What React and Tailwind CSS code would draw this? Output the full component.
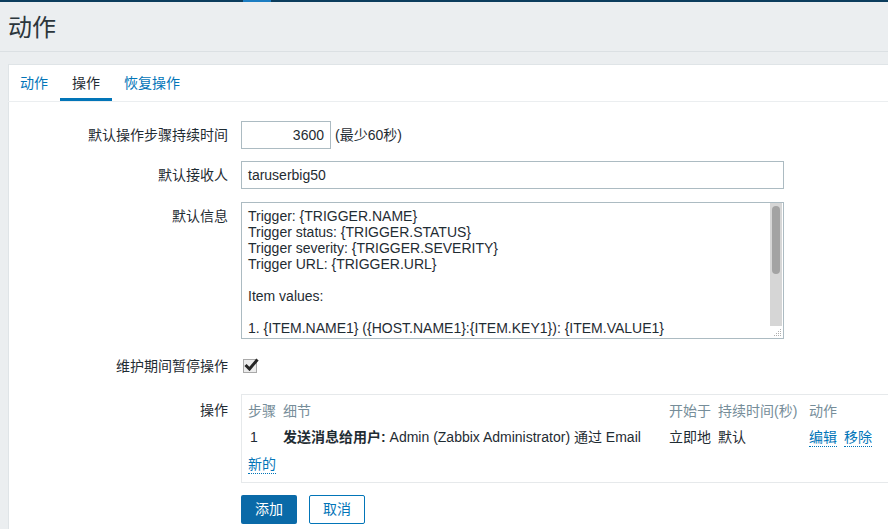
import { useState } from "react";

const font = { fontFamily: '"Liberation Sans", Arial, "Noto Sans CJK SC", sans-serif' };

const messageLines = [
  "Trigger: {TRIGGER.NAME}",
  "Trigger status: {TRIGGER.STATUS}",
  "Trigger severity: {TRIGGER.SEVERITY}",
  "Trigger URL: {TRIGGER.URL}",
  "",
  "Item values:",
  "",
  "1. {ITEM.NAME1} ({HOST.NAME1}:{ITEM.KEY1}): {ITEM.VALUE1}",
];

function Row({ label, top = false, children, labelClass = "" }) {
  return (
    <div className={`flex ${top ? "items-start" : "items-center"}`}>
      <div className={`w-[220px] shrink-0 pr-[1px] text-right leading-[28px] ${labelClass}`}>{label}</div>
      <div className="ml-[12px] flex-1">{children}</div>
    </div>
  );
}

function DotLink({ children }) {
  return <a className="cursor-pointer border-b border-dotted border-[#0275b8] leading-[17px] text-[#0275b8]">{children}</a>;
}

export default function App() {
  const [tab, setTab] = useState(1);
  const [paused, setPaused] = useState(true);
  const tabs = ["动作", "操作", "恢复操作"];

  return (
    <div className="min-h-[529px] w-[888px] overflow-hidden bg-[#ebeef0] text-[14px] text-[#1f2c33]" style={font}>
      <div className="flex h-[2px] bg-[#0b3d5d]">
        <div className="ml-[243px] w-[28px] bg-[#1b7dc2]" />
      </div>
      <div className="border-b border-[#dbe0e3] px-[8px] pt-[12px] pb-[9px]">
        <h1 className="text-[24px] leading-[28px] font-normal text-[#2b363c]">动作</h1>
      </div>

      <div className="ml-[8px] mt-[12px] min-h-[465px] border-t border-l border-[#dfe4e7] bg-white">
        <div className="-ml-[1px] flex h-[37px] border-b border-[#ebeef0]">
          {tabs.map((t, i) => (
            <button
              key={t}
              onClick={() => setTab(i)}
              className={`h-[36px] px-[12px] pt-[1px] ${i === tab ? "border-b-[3px] border-[#0275b8] pt-[4px] text-[#1f2c33]" : "text-[#0275b8]"}`}
            >
              {t}
            </button>
          ))}
        </div>

        <div className="flex flex-col pt-[19px]">
          <Row label="默认操作步骤持续时间">
            <div className="flex items-center">
              <div className="h-[28px] w-[90px] border border-[#acbbc2] px-[6px] text-right leading-[26px]">3600</div>
              <span className="ml-[4px]">(最少60秒)</span>
            </div>
          </Row>

          <div className="mt-[12px]">
            <Row label="默认接收人">
              <div className="h-[28px] w-[543px] border border-[#acbbc2] px-[6px] leading-[26px]">taruserbig50</div>
            </Row>
          </div>

          <div className="mt-[13px]">
            <Row label="默认信息" top>
              <div className="flex h-[137px] w-[543px] border border-[#acbbc2]">
                <div className="flex-1 overflow-hidden pl-[6px] pt-[5px] leading-[16px]">
                  {messageLines.map((l, i) => (
                    <div key={i} className="h-[16px] whitespace-pre">{l}</div>
                  ))}
                </div>
                <div className="mr-[1px] flex w-[12px] flex-col">
                  <div className="flex-1 bg-[#d6d6d6] px-[2px] pt-[3px]">
                    <div className="h-[68px] rounded-[4px] bg-[#a3a3a3]" />
                  </div>
                  <div className="flex h-[12px] items-end justify-end pb-[1px]">
                    <svg width="8" height="8" viewBox="0 0 8 8">
                      <g fill="#b0b0b0">
                        <rect x="6" y="0" width="1" height="1" />
                        <rect x="4" y="2" width="1" height="1" />
                        <rect x="6" y="2" width="1" height="1" />
                        <rect x="2" y="4" width="1" height="1" />
                        <rect x="4" y="4" width="1" height="1" />
                        <rect x="6" y="4" width="1" height="1" />
                        <rect x="0" y="6" width="1" height="1" />
                        <rect x="2" y="6" width="1" height="1" />
                        <rect x="4" y="6" width="1" height="1" />
                        <rect x="6" y="6" width="1" height="1" />
                      </g>
                    </svg>
                  </div>
                </div>
              </div>
            </Row>
          </div>

          <div className="mt-[13px]">
            <Row label="维护期间暂停操作">
              <button
                onClick={() => setPaused(!paused)}
                className="ml-[2px] flex h-[14px] w-[14px] items-center justify-center border border-[#a9a9a9] bg-[#ececec]"
              >
                {paused && (
                  <svg width="15" height="13" viewBox="0 0 15 13" className="-mt-[3px] ml-[3px] shrink-0">
                    <path d="M1.5 7 L5.5 11 L13.5 1.5" fill="none" stroke="#262626" strokeWidth="3" />
                  </svg>
                )}
              </button>
            </Row>
          </div>

          <div className="mt-[14px]">
            <Row label="操作" top labelClass="pt-[2px]">
              <div className="w-[660px] border-y border-l border-[#e6e9eb] pb-[4px] pl-[6px] pt-[3px]">
                <div className="flex h-[26px] items-center text-[#768d99]">
                  <div className="w-[35px]">步骤</div>
                  <div className="w-[386px]">细节</div>
                  <div className="w-[49px]">开始于</div>
                  <div className="w-[91px]">持续时间(秒)</div>
                  <div>动作</div>
                </div>
                <div className="flex h-[27px] items-center">
                  <div className="w-[35px] pl-[2px]">1</div>
                  <div className="w-[386px] whitespace-nowrap">
                    <span className="font-bold">发送消息给用户:</span> Admin (Zabbix Administrator) 通过 Email
                  </div>
                  <div className="w-[49px]">立即地</div>
                  <div className="w-[91px]">默认</div>
                  <div className="flex gap-[7px]">
                    <DotLink>编辑</DotLink>
                    <DotLink>移除</DotLink>
                  </div>
                </div>
                <div className="flex h-[27px] items-center">
                  <DotLink>新的</DotLink>
                </div>
              </div>
            </Row>
          </div>

          <div className="ml-[232px] mt-[12px] flex gap-[12px]">
            <button className="h-[29px] w-[56px] rounded-[2px] bg-[#0a6aa8] text-white">添加</button>
            <button className="h-[29px] w-[56px] rounded-[2px] border border-[#0275b8] bg-white text-[#0275b8]">取消</button>
          </div>
        </div>
      </div>
    </div>
  );
}
